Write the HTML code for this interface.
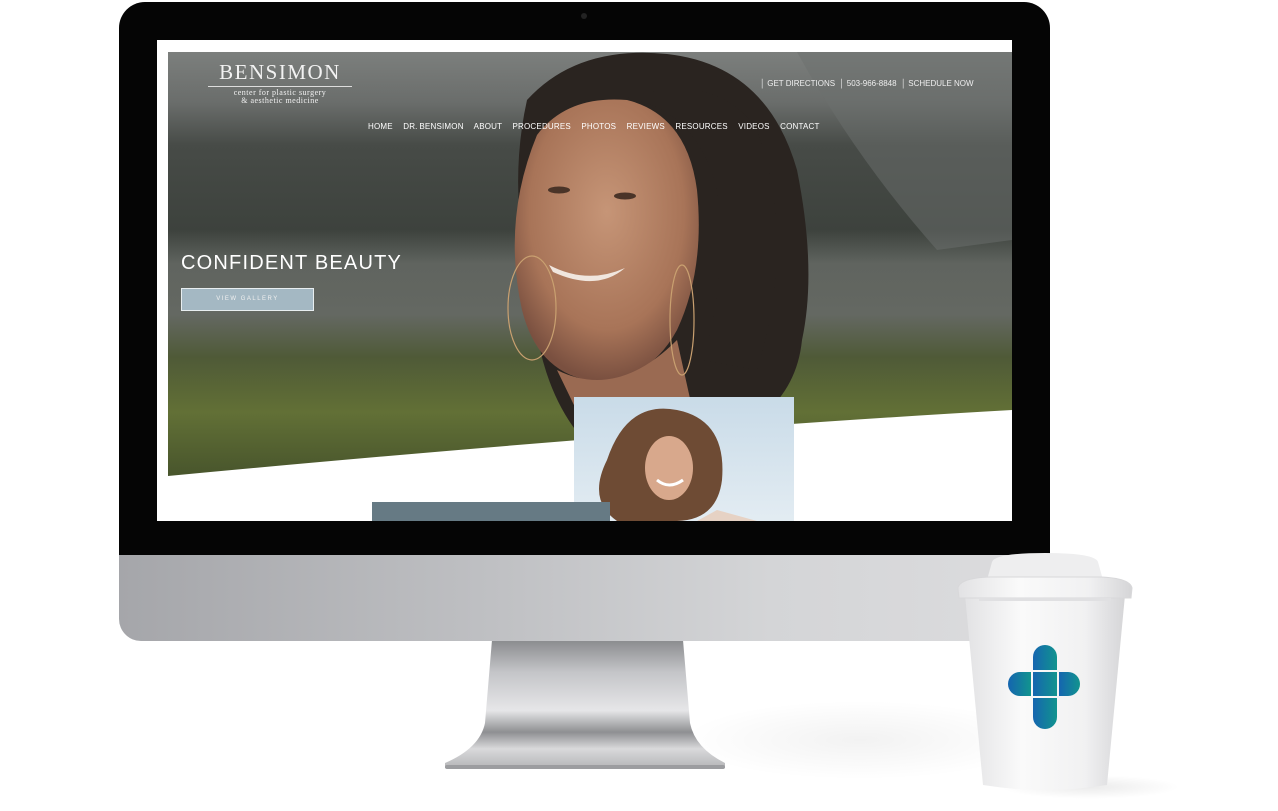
<!DOCTYPE html>
<html><head><meta charset="utf-8"><style>
body{margin:0;width:1278px;height:811px;background:#fff;position:relative;overflow:hidden;font-family:"Liberation Sans",sans-serif}
.a{position:absolute}
</style></head><body>
<div class="a" style="left:680px;top:700px;width:360px;height:80px;border-radius:50%;background:radial-gradient(ellipse,rgba(0,0,0,.05),rgba(0,0,0,0) 70%)"></div>
<svg class="a" style="left:440px;top:638px" width="290" height="135">
<defs><linearGradient id="st" x1="0" y1="0" x2="0" y2="1">
<stop offset="0" stop-color="#8a8b8e"/><stop offset=".25" stop-color="#c4c5c8"/><stop offset=".55" stop-color="#e6e6e8"/><stop offset=".72" stop-color="#8e8f92"/><stop offset=".85" stop-color="#d9d9db"/><stop offset="1" stop-color="#b5b6b8"/></linearGradient></defs>
<path d="M52 2 L243 2 L250 85 Q255 110 285 125 L285 130 L5 130 L5 125 Q40 110 45 85 Z" fill="url(#st)"/>
<rect x="5" y="127" width="280" height="4" rx="2" fill="#9c9da0"/>
</svg>
<div class="a" style="left:119px;top:2px;width:931px;height:555px;background:#050505;border-radius:26px 26px 0 0"></div>
<div class="a" style="left:581px;top:13px;width:6px;height:6px;border-radius:50%;background:#222"></div>
<div class="a" style="left:119px;top:555px;width:931px;height:86px;border-radius:0 0 22px 22px;background:linear-gradient(90deg,#a5a6aa,#bfc0c3 40%,#d4d5d7 70%,#dcdcde)"></div>
<div class="a" style="left:157px;top:40px;width:855px;height:481px;background:#fff;overflow:hidden">
<svg class="a" style="left:0;top:0" width="855" height="481">
<defs>
<linearGradient id="bg" x1="0" y1="0" x2="0" y2="1">
<stop offset="0" stop-color="#7c7f7d"/><stop offset=".12" stop-color="#6a6d6b"/><stop offset=".22" stop-color="#474b47"/><stop offset=".42" stop-color="#3d423d"/><stop offset=".5" stop-color="#60645f"/><stop offset=".62" stop-color="#646862"/><stop offset=".72" stop-color="#4f5a37"/><stop offset=".85" stop-color="#627036"/><stop offset="1" stop-color="#48552c"/></linearGradient>
<radialGradient id="sk" cx=".5" cy=".4" r=".6"><stop offset="0" stop-color="#c69577"/><stop offset=".7" stop-color="#a87458"/><stop offset="1" stop-color="#7a5040"/></radialGradient>
<linearGradient id="sky2" x1="0" y1="0" x2="0" y2="1"><stop offset="0" stop-color="#c9dbe8"/><stop offset="1" stop-color="#e4edf3"/></linearGradient>
</defs>
<path d="M11 12 L855 12 L855 370 Q500 390 11 436 Z" fill="url(#bg)"/>
<path d="M640 12 L855 12 L855 200 L780 210 Q700 120 640 12Z" fill="#6c706d" opacity=".5"/>
<path d="M370 60 Q420 5 510 14 Q610 25 640 130 Q660 230 645 300 Q640 350 600 380 L420 392 Q380 340 375 250 Q350 150 370 60Z" fill="#2a2420"/>
<path d="M380 95 Q410 55 470 60 Q530 75 540 150 Q548 230 520 290 Q490 345 430 340 Q380 330 365 270 Q345 180 380 95Z" fill="url(#sk)"/>
<path d="M400 330 Q460 360 520 300 L540 390 L430 392 Z" fill="#9a6a52"/>
<path d="M470 58 Q540 70 560 150 Q570 250 545 320 L600 330 Q640 200 600 90 Q560 30 470 58Z" fill="#2a2420"/>
<path d="M392 225 Q430 245 468 228 Q440 252 396 232Z" fill="#f0e6de"/>
<ellipse cx="402" cy="150" rx="11" ry="3.5" fill="#4a3428"/><ellipse cx="468" cy="156" rx="11" ry="3.5" fill="#4a3428"/>
<ellipse cx="375" cy="268" rx="24" ry="52" fill="none" stroke="#c9a070" stroke-width="1.2"/>
<ellipse cx="525" cy="280" rx="12" ry="55" fill="none" stroke="#c9a070" stroke-width="1.2"/>
<rect x="417" y="357" width="220" height="130" fill="url(#sky2)"/>
<path d="M450 420 Q470 360 520 370 Q570 380 565 440 Q560 480 520 481 L460 481 Q430 460 450 420Z" fill="#6e4b34"/>
<ellipse cx="512" cy="428" rx="24" ry="32" fill="#d8a88c"/>
<path d="M500 440 Q512 450 526 440" stroke="#fff" stroke-width="3" fill="none"/>
<path d="M560 470 L600 481 L540 481Z" fill="#e6d2c4"/>
<rect x="215" y="462" width="238" height="19" fill="#667a84"/>
</svg>
<div class="a" style="left:51px;top:20px;width:144px;text-align:center;color:#f2f2f2">
<div style="font-family:'Liberation Serif',serif;font-size:21px;letter-spacing:1.5px;line-height:24px">BENSIMON</div>
<div style="border-top:1px solid #ddd;margin:2px 0 2px"></div>
<div style="font-family:'Liberation Serif',serif;font-size:8px;line-height:8px;letter-spacing:.5px">center for plastic surgery<br>&amp; aesthetic medicine</div>
</div>
<div class="a" style="left:603px;top:39px;color:#eee;font-size:8px;white-space:nowrap">│ GET DIRECTIONS &nbsp;│ 503-966-8848 &nbsp;│ SCHEDULE NOW</div>
<div class="a" style="left:211px;top:82px;color:#fff;font-size:8px;word-spacing:8px;white-space:nowrap;letter-spacing:.2px">HOME DR.&#8239;BENSIMON ABOUT PROCEDURES PHOTOS REVIEWS RESOURCES VIDEOS CONTACT</div>
<div class="a" style="left:24px;top:212px;color:#fff;font-size:20px;letter-spacing:1.2px">CONFIDENT BEAUTY</div>
<div class="a" style="left:24px;top:248px;width:131px;height:21px;background:#a4b8c3;border:1px solid #e8eef0;color:#f0f0f0;font-size:6px;letter-spacing:1.5px;text-align:center;line-height:21px">VIEW GALLERY</div>
</div>
<div class="a" style="left:1000px;top:775px;width:180px;height:24px;border-radius:50%;background:radial-gradient(ellipse,rgba(0,0,0,.08),rgba(0,0,0,0) 70%)"></div>
<svg class="a" style="left:955px;top:550px" width="180" height="250">
<defs><linearGradient id="cp" x1="0" y1="0" x2="1" y2="0"><stop offset="0" stop-color="#e2e2e4"/><stop offset=".35" stop-color="#fafafa"/><stop offset=".75" stop-color="#f1f1f2"/><stop offset="1" stop-color="#d5d5d7"/></linearGradient>
<linearGradient id="lg" x1="0" y1="0" x2="1" y2="0"><stop offset="0" stop-color="#1565b0"/><stop offset="1" stop-color="#11948e"/></linearGradient></defs>
<path d="M10 45 L170 45 L152 235 Q90 245 28 235 Z" fill="url(#cp)"/>
<path d="M37 12 Q40 3 90 3 Q140 3 143 12 L148 30 L32 30Z" fill="#eeeeef"/>
<path d="M3 38 Q5 28 35 27 L145 27 Q175 28 177 38 L176 48 L4 48Z" fill="url(#cp)" stroke="#d8d8da"/>
<rect x="24" y="48" width="132" height="3" fill="#e0e0e2"/>
<g fill="url(#lg)">
<path d="M78 107 a12 12 0 0 1 24 0 v13 h-24z"/>
<rect x="78" y="122" width="24" height="24"/>
<path d="M78 148 h24 v19 a12 12 0 0 1 -24 0z"/>
<path d="M76 122 v24 h-11 a12 12 0 0 1 0 -24z"/>
<path d="M104 122 h9 a12 12 0 0 1 0 24 h-9z"/>
</g>
</svg>
</body></html>
